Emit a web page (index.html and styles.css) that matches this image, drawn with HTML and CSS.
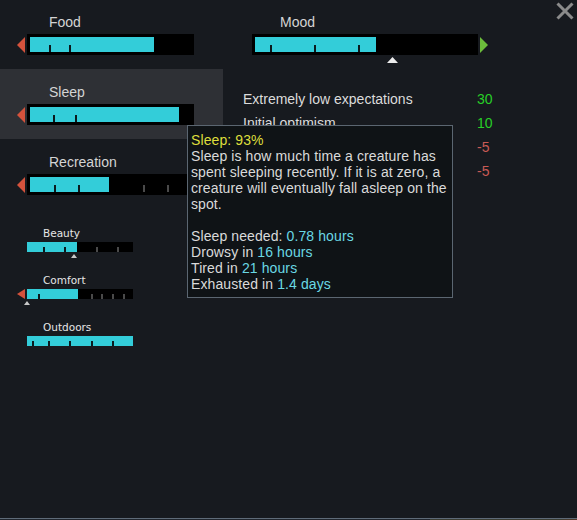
FILE: index.html
```html
<!DOCTYPE html>
<html>
<head>
<meta charset="utf-8">
<link rel="stylesheet" href="styles.css">
</head>
<body>
<div class="screen">
  <div class="left">
    <div class="stat first">
      <div class="stat-label">Food</div>
      <div class="bar-row">
        <svg class="arrow" width="8" height="16" viewBox="0 0 8 16"><polygon points="8,0 0,8 8,16" class="red"/></svg>
        <div class="bar">
          <div class="fill" style="width:124px"></div>
          <i class="tick" style="left:22px"></i>
          <i class="tick" style="left:42px"></i>
        </div>
      </div>
    </div>
    <div class="stat active">
      <div class="stat-label">Sleep</div>
      <div class="bar-row">
        <svg class="arrow" width="8" height="16" viewBox="0 0 8 16"><polygon points="8,0 0,8 8,16" class="red"/></svg>
        <div class="bar">
          <div class="fill" style="width:149px"></div>
          <i class="tick" style="left:26px"></i>
          <i class="tick" style="left:48px"></i>
        </div>
      </div>
    </div>
    <div class="stat">
      <div class="stat-label">Recreation</div>
      <div class="bar-row">
        <svg class="arrow" width="8" height="16" viewBox="0 0 8 16"><polygon points="8,0 0,8 8,16" class="red"/></svg>
        <div class="bar">
          <div class="fill" style="width:79px"></div>
          <i class="tick" style="left:27px"></i>
          <i class="tick" style="left:51px"></i>
          <i class="tick off" style="left:116px"></i>
          <i class="tick off" style="left:140px"></i>
        </div>
      </div>
    </div>

    <div class="subs">
      <div class="sub">
        <div class="sub-label">Beauty</div>
        <div class="sub-row">
          <span class="sub-arrow"></span>
          <div class="sbar">
            <div class="sfill" style="width:50px"></div>
            <i class="stick" style="left:16px"></i>
            <i class="stick" style="left:37px"></i>
            <i class="stick off" style="left:69px"></i>
            <i class="stick off" style="left:90px"></i>
            <svg class="marker" style="left:44px" width="6" height="4" viewBox="0 0 6 4"><polygon points="0,4 3,0 6,4"/></svg>
          </div>
        </div>
      </div>
      <div class="sub">
        <div class="sub-label">Comfort</div>
        <div class="sub-row">
          <svg class="sub-arrow" width="8" height="10" viewBox="0 0 8 10"><polygon points="8,0 0,5 8,10" class="red"/></svg>
          <div class="sbar">
            <div class="sfill" style="width:51px"></div>
            <i class="stick" style="left:11px"></i>
            <i class="stick off" style="left:64px"></i>
            <i class="stick off" style="left:74px"></i>
            <i class="stick off" style="left:85px"></i>
            <i class="stick off" style="left:96px"></i>
            <svg class="marker" style="left:-3px" width="6" height="4" viewBox="0 0 6 4"><polygon points="0,4 3,0 6,4"/></svg>
          </div>
        </div>
      </div>
      <div class="sub">
        <div class="sub-label">Outdoors</div>
        <div class="sub-row">
          <span class="sub-arrow"></span>
          <div class="sbar">
            <div class="sfill" style="width:106px"></div>
            <i class="stick" style="left:5px"></i>
            <i class="stick" style="left:21px"></i>
            <i class="stick" style="left:42px"></i>
            <i class="stick" style="left:64px"></i>
            <i class="stick" style="left:85px"></i>
          </div>
        </div>
      </div>
    </div>
  </div>

  <div class="right">
    <div class="mood-col">
      <div class="mood">
        <div class="mood-label">Mood</div>
        <div class="bar-row">
          <div class="bar mood-bar">
            <div class="fill" style="width:121px"></div>
            <i class="tick" style="left:18px"></i>
            <i class="tick" style="left:62px"></i>
            <i class="tick" style="left:106px"></i>
            <svg class="mood-marker" style="left:135px" width="11" height="6" viewBox="0 0 11 6"><polygon points="0,6 5.5,0 11,6"/></svg>
          </div>
          <svg class="arrow" width="8" height="16" viewBox="0 0 8 16"><polygon points="0,0 8,8 0,16" class="green"/></svg>
        </div>
      </div>
      <ul class="mods">
        <li><span class="mod-name">Extremely low expectations</span><span class="pos">30</span></li>
        <li><span class="mod-name">Initial optimism</span><span class="pos">10</span></li>
        <li><span class="mod-name">Hungry</span><span class="neg">-5</span></li>
        <li><span class="mod-name">Uncomfortable</span><span class="neg">-5</span></li>
      </ul>
    </div>
    <svg class="close" width="18" height="18" viewBox="0 0 18 18"><path d="M1.5 1.5 L16.5 16.5 M16.5 1.5 L1.5 16.5"/></svg>
  </div>
</div>
<div class="footer"></div>

<div class="tooltip">
  <div class="tt-title">Sleep: 93%</div>
  <div>Sleep is how much time a creature has</div>
  <div>spent sleeping recently. If it is at zero, a</div>
  <div>creature will eventually fall asleep on the</div>
  <div>spot.</div>
  <div class="tt-gap"></div>
  <div>Sleep needed: <span class="val">0.78 hours</span></div>
  <div>Drowsy in <span class="val">16 hours</span></div>
  <div>Tired in <span class="val">21 hours</span></div>
  <div>Exhausted in <span class="val">1.4 days</span></div>
</div>
</body>
</html>
```
FILE: styles.css
```css
html, body {
  margin: 0;
  padding: 0;
}
body {
  width: 577px;
  height: 520px;
  background: #171a1f;
  font-family: "Liberation Sans", Arial, sans-serif;
  color: #d6d6d6;
  overflow: hidden;
  position: relative;
}
.screen {
  display: flex;
  height: 518px;
}
.left {
  width: 223px;
  flex: none;
}
.stat {
  height: 70px;
  padding-top: 15px;
  box-sizing: border-box;
}
.stat.first {
  height: 69px;
  padding-top: 14px;
}
.stat.active {
  background: #2e3035;
}
.stat-label {
  margin-left: 49px;
  font-size: 14px;
  line-height: 16px;
  margin-bottom: 4px;
  color: #d4d4d4;
}
.bar-row {
  display: flex;
  align-items: center;
  gap: 2px;
  margin-left: 17px;
}
.arrow {
  display: block;
  flex: none;
}
.red { fill: #d5523c; }
.green { fill: #6cbd3b; }
.bar {
  position: relative;
  width: 167px;
  height: 21px;
  padding: 3px;
  box-sizing: border-box;
  background: #000;
}
.fill {
  height: 15px;
  background: #33cdd9;
}
.tick {
  position: absolute;
  top: 11px;
  width: 2px;
  height: 7px;
  background: #0b1a1e;
}
.tick.off {
  background: #4a4a4a;
}

.subs {
  padding-top: 18px;
}
.sub {
  height: 47px;
}
.sub-label {
  margin-left: 43px;
  font-family: "DejaVu Sans", sans-serif;
  font-size: 10.5px;
  line-height: 12px;
  margin-bottom: 3px;
  color: #e6e6e6;
}
.sub-row {
  display: flex;
  align-items: center;
  gap: 2px;
  margin-left: 17px;
}
.sub-arrow {
  display: block;
  width: 8px;
  height: 10px;
  flex: none;
}
.sbar {
  position: relative;
  width: 106px;
  height: 10px;
  background: #000;
}
.sfill {
  height: 10px;
  background: #33cdd9;
}
.stick {
  position: absolute;
  top: 5px;
  width: 2px;
  height: 5px;
  background: #0b1a1e;
}
.stick.off {
  background: #4a4a4a;
}
.marker {
  position: absolute;
  top: 12px;
  display: block;
  fill: #c8c8c8;
}

.right {
  flex: 1;
  display: flex;
  padding-left: 20px;
}
.mood-col {
  flex: 1;
}
.mood {
  padding-top: 14px;
}
.mood-label {
  margin-left: 37px;
  font-size: 14px;
  line-height: 16px;
  margin-bottom: 4px;
  color: #d4d4d4;
}
.mood .bar-row {
  margin-left: 0;
}
.mood-bar {
  width: 226px;
  margin-left: 9px;
}
.mood-marker {
  position: absolute;
  top: 23px;
  display: block;
  fill: #ececec;
}
.mods {
  list-style: none;
  margin: 32px 0 0 0;
  padding: 0;
  font-size: 14px;
  line-height: 24px;
  color: #dcdcdc;
}
.mods li {
  display: flex;
}
.mod-name {
  width: 234px;
  flex: none;
}
.pos { color: #27cf27; }
.neg { color: #c95a55; }

.close {
  display: block;
  flex: none;
  margin: 2px 3px 0 0;
  stroke: #8b8b8b;
  stroke-width: 3;
  fill: none;
}

.footer {
  height: 1px;
  border-top: 1px solid #5f6b78;
  background: linear-gradient(to right, #1f252d 0, #1f252d 430px, #3a3d33 430px, #3a3d33 560px, #5a3a2a 577px);
}

.tooltip {
  position: absolute;
  left: 187px;
  top: 125px;
  width: 266px;
  height: 173px;
  box-sizing: border-box;
  padding: 6px 3px 5px 3px;
  border: 1px solid #5b6671;
  background: #0f1316;
  font-size: 14px;
  line-height: 16px;
  letter-spacing: 0.1px;
  color: #dadada;
  white-space: nowrap;
}
.tt-title {
  color: #dede3c;
}
.tt-gap {
  height: 16px;
}
.val {
  color: #6ad8e4;
}
```
